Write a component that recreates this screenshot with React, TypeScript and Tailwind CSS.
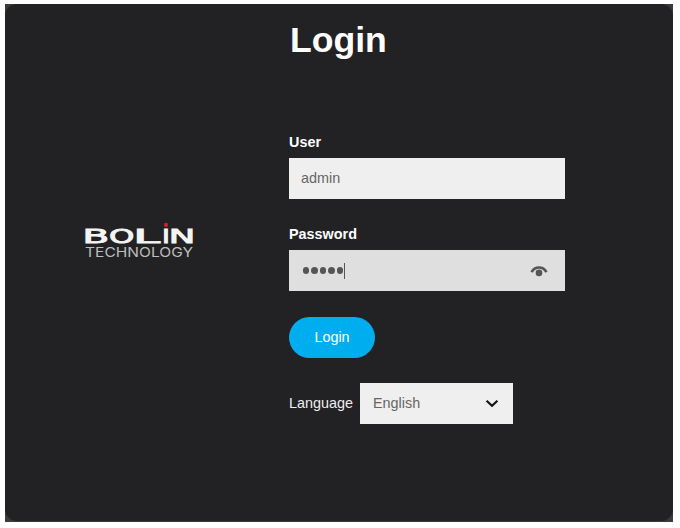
import { useState } from "react";

const LANGUAGES = ["English"];

// Wide letters of the wordmark, each with its own stretch
const LETTERS = [
  { char: "B", x: -1.5, width: 26.7 },
  { char: "O", x: 25.1, width: 25.4 },
  { char: "L", x: 49.3, width: 26.7 },
  { char: "I", x: 78, width: 7.9 },
  { char: "N", x: 84.7, width: 26.5 },
];

// Wordmark with the red dot over the "I"
function Logo() {
  return (
    <svg
      width="112"
      height="40"
      viewBox="0 0 112 40"
      role="img"
      aria-label="Bolin Technology"
      className="shrink-0 overflow-visible"
    >
      <text
        y="22"
        fontFamily="'DejaVu Sans', sans-serif"
        fontSize="19.8"
        fill="#f4f4f4"
        stroke="#f4f4f4"
        strokeWidth="0.9"
      >
        {LETTERS.map(({ char, x, width }) => (
          <tspan key={char} x={x} textLength={width} lengthAdjust="spacingAndGlyphs">
            {char}
          </tspan>
        ))}
      </text>
      <rect x="80.2" y="2" width="3.6" height="3.8" rx="0.8" fill="#e01b24" />
      <text
        x="1"
        y="36.2"
        fontFamily="Inter, 'Liberation Sans', sans-serif"
        fontSize="13"
        fill="#bdbdbd"
        textLength="108"
        lengthAdjust="spacingAndGlyphs"
      >
        TECHNOLOGY
      </text>
    </svg>
  );
}

function EyeIcon() {
  return (
    <svg width="18" height="12" viewBox="0 0 18 12" fill="none">
      <path d="M1.6 7.2C4.8 0.9 13.2 0.9 16.4 7.2" stroke="#555" strokeWidth="2.7" />
      <circle cx="9" cy="7.9" r="3.3" fill="#555" />
    </svg>
  );
}

export default function App() {
  const [user, setUser] = useState("admin");
  const [language, setLanguage] = useState(LANGUAGES[0]);
  const passwordLength = 5;

  return (
    <div className="h-[528px] w-[680px] overflow-hidden bg-white pt-1 pl-[5px] font-['Liberation_Sans',Arial,sans-serif] text-[14.4px] text-white">
      <div className="h-[518px] w-[668px] bg-[#3a3a3a]">
        <main className="flex h-[517px] rounded-xl bg-[#222224]">
          <div className="w-[284px] pt-[217px] pl-[79px]">
            <Logo />
          </div>

          <form className="w-[276px] pt-[15px]" onSubmit={(e) => e.preventDefault()}>
            <h1 className="pl-px text-[35.6px] leading-[42px] font-bold">Login</h1>

            <label htmlFor="user" className="mt-[71px] block leading-5 font-bold">
              User
            </label>
            <input
              id="user"
              value={user}
              onChange={(e) => setUser(e.target.value)}
              className="mt-1.5 block h-[41px] w-full bg-[#efefef] px-3 pb-px text-[#666] outline-none"
            />

            <div className="mt-[25px] leading-5 font-bold">Password</div>
            <div className="mt-1.5 flex h-[41px] items-center justify-between bg-[#dfdfdf] pr-[17px] pl-[13.5px]">
              <div className="flex items-center gap-[2px]">
                {Array.from({ length: passwordLength }, (_, i) => (
                  <span key={i} className="size-[6.6px] rounded-full bg-[#555]" />
                ))}
                <span className="-ml-px h-4 w-px bg-[#555]" />
              </div>
              <button type="button" aria-label="Show password">
                <EyeIcon />
              </button>
            </div>

            <button
              type="submit"
              className="mt-[26px] block h-[41px] w-[86px] rounded-full bg-[#00aeef]"
            >
              Login
            </button>

            <div className="mt-[25px] flex items-center">
              <label htmlFor="language" className="w-[71px] text-[#eee]">
                Language
              </label>
              <div className="grid h-[41px] w-[153px] items-center bg-[#efefef]">
                <select
                  id="language"
                  value={language}
                  onChange={(e) => setLanguage(e.target.value)}
                  className="col-start-1 row-start-1 h-full w-full appearance-none pl-[13px] text-[#666] outline-none"
                >
                  {LANGUAGES.map((name) => (
                    <option key={name}>{name}</option>
                  ))}
                </select>
                <svg
                  width="14"
                  height="9"
                  viewBox="0 0 14 9"
                  fill="none"
                  className="pointer-events-none col-start-1 row-start-1 mr-3.5 justify-self-end"
                >
                  <path d="M1.6 1.8L7 6.8l5.4-5" stroke="#111" strokeWidth="2.1" />
                </svg>
              </div>
            </div>
          </form>
        </main>
      </div>
    </div>
  );
}
